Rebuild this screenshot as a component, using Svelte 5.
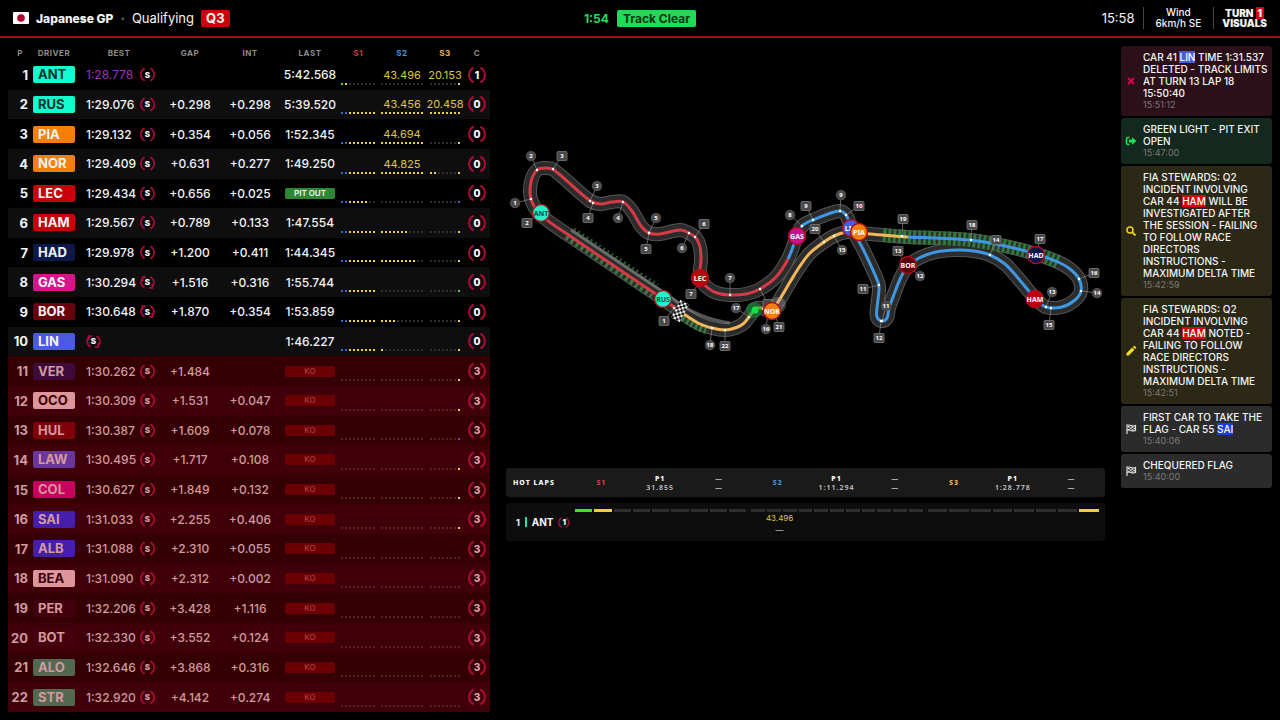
<script lang="ts">
    type Row = {
        code: string;
        bg: string;
        fg?: string;
        best: string;
        gap: string;
        int: string;
        last: string;
        s1: string;
        s2: string;
        s3: string;
        t2?: string;
        t3?: string;
        used?: boolean;
        count: number;
        top?: boolean;
    };

    const FULL1 = "bbyyyyyyy";
    const FULL2 = "yyyyyyyyyyy";
    const NONE1 = "---------";
    const NONE2 = "-----------";
    const NONE3 = "--------";

    // sector strings: one letter per mini sector (y, b, g, p or - for not set)
    const running: Row[] = [
        { code: "ANT", bg: "#14fbd0", fg: "#06332b", best: "1:28.778", gap: "", int: "", last: "5:42.568", s1: "gy-------", s2: NONE2, s3: "-------y", t2: "43.496", t3: "20.153", count: 1, top: true },
        { code: "RUS", bg: "#14fbd0", fg: "#06332b", best: "1:29.076", gap: "+0.298", int: "+0.298", last: "5:39.520", s1: FULL1, s2: FULL2, s3: "yyyyyyyy", t2: "43.456", t3: "20.458", count: 0 },
        { code: "PIA", bg: "#f67f0b", best: "1:29.132", gap: "+0.354", int: "+0.056", last: "1:52.345", s1: FULL1, s2: FULL2, s3: "-------y", t2: "44.694", count: 0 },
        { code: "NOR", bg: "#f67f0b", best: "1:29.409", gap: "+0.631", int: "+0.277", last: "1:49.250", s1: FULL1, s2: FULL2, s3: "yy-----y", t2: "44.825", count: 0 },
        { code: "LEC", bg: "#c70009", best: "1:29.434", gap: "+0.656", int: "+0.025", last: "PIT OUT", s1: "bbyyyyy--", s2: NONE2, s3: "-------b", count: 0 },
        { code: "HAM", bg: "#c70009", best: "1:29.567", gap: "+0.789", int: "+0.133", last: "1:47.554", s1: FULL1, s2: "yyyyyyy----", s3: "-------y", count: 0 },
        { code: "HAD", bg: "#0c1a4b", best: "1:29.978", gap: "+1.200", int: "+0.411", last: "1:44.345", s1: FULL1, s2: "yyyyyyyyy--", s3: "-------y", count: 0 },
        { code: "GAS", bg: "#d6148b", best: "1:30.294", gap: "+1.516", int: "+0.316", last: "1:55.744", s1: FULL1, s2: NONE2, s3: "-------g", used: true, count: 0 },
        { code: "BOR", bg: "#67000c", best: "1:30.648", gap: "+1.870", int: "+0.354", last: "1:53.859", s1: FULL1, s2: "yyyy-------", s3: "-------y", used: true, count: 0 },
        { code: "LIN", bg: "#4b5be0", best: "", gap: "", int: "", last: "1:46.227", s1: FULL1, s2: "y----------", s3: "-------y", used: true, count: 0 },
    ];

    // code, badge, text, best, gap, interval, last mini sector
    const out: string[][] = [
        ["VER", "#3d0a3a", "", "1:30.262", "+1.484", "", "y"],
        ["OCO", "#de969c", "#3d0008", "1:30.309", "+1.531", "+0.047", "y"],
        ["HUL", "#80000a", "", "1:30.387", "+1.609", "+0.078", "p"],
        ["LAW", "#69379b", "", "1:30.495", "+1.717", "+0.108", "y"],
        ["COL", "#c8005e", "", "1:30.627", "+1.849", "+0.132", "y"],
        ["SAI", "#451fac", "", "1:31.033", "+2.255", "+0.406", "y"],
        ["ALB", "#451fac", "", "1:31.088", "+2.310", "+0.055", "-"],
        ["BEA", "#de969c", "#3d0008", "1:31.090", "+2.312", "+0.002", "-"],
        ["PER", "#400010", "", "1:32.206", "+3.428", "+1.116", "-"],
        ["BOT", "#460010", "", "1:32.330", "+3.552", "+0.124", "-"],
        ["ALO", "#52684f", "", "1:32.646", "+3.868", "+0.316", "-"],
        ["STR", "#52684f", "", "1:32.920", "+4.142", "+0.274", "-"],
    ];

    const rows: Row[] = [
        ...running,
        ...out.map(([code, bg, fg, best, gap, int, end]) => ({
            code, bg, fg, best, gap, int, last: "KO",
            s1: NONE1, s2: NONE2, s3: NONE3.slice(1) + end, count: 3,
        })),
    ];

    const messages = [
        { kind: "deleted", text: "CAR 41", code: "LIN", color: "#4b5bd8", rest: "TIME 1:31.537 DELETED - TRACK LIMITS AT TURN 13 LAP 18 15:50:40", time: "15:51:12" },
        { kind: "green", text: "GREEN LIGHT - PIT EXIT OPEN", time: "15:47:00" },
        { kind: "search", text: "FIA STEWARDS: Q2 INCIDENT INVOLVING CAR 44", code: "HAM", color: "#d6000c", rest: "WILL BE INVESTIGATED AFTER THE SESSION - FAILING TO FOLLOW RACE DIRECTORS INSTRUCTIONS - MAXIMUM DELTA TIME", time: "15:42:59" },
        { kind: "noted", text: "FIA STEWARDS: Q2 INCIDENT INVOLVING CAR 44", code: "HAM", color: "#d6000c", rest: "NOTED - FAILING TO FOLLOW RACE DIRECTORS INSTRUCTIONS - MAXIMUM DELTA TIME", time: "15:42:51" },
        { kind: "finish", text: "FIRST CAR TO TAKE THE FLAG - CAR 55", code: "SAI", color: "#1440dc", rest: "", time: "15:40:06" },
        { kind: "finish", text: "CHEQUERED FLAG", time: "15:40:00" },
    ];

    const TRACK: number[][] = [
        [678, 310], [663, 299], [570, 236], [541, 215], [531, 199], [531, 182], [537, 170], [546, 168], [554, 170],
        [589, 200], [600, 204], [612, 202], [623, 202], [632, 211], [641, 226], [649, 233], [660, 234], [680, 230],
        [689, 233], [696, 238], [700, 247], [701, 260], [700, 278], [708, 288], [717, 293], [730, 295], [746, 294],
        [760, 289], [776, 277], [788, 259], [797, 236], [802, 226], [813, 220], [839, 211], [846, 215], [851, 227],
        [863, 249], [878, 282], [879, 290], [877, 308], [877, 317], [882, 321], [887, 318], [889, 308], [893, 297],
        [901, 277], [908, 266], [919, 258], [936, 252], [956, 250], [974, 251], [990, 255], [1005, 264], [1018, 278],
        [1035, 298], [1046, 307], [1062, 307], [1075, 300], [1081, 291], [1079, 279], [1070, 269], [1058, 262],
        [1036, 254], [1005, 246], [970, 240], [935, 238], [908, 237], [882, 235], [859, 233], [847, 232], [834, 236],
        [824, 242], [810, 253], [800, 266], [790, 282], [776, 305], [770, 310], [757, 308], [749, 317], [743, 324],
        [735, 328], [725, 330], [712, 328], [698, 323],
    ];

    const smooth = (from: number, to: number): string => {
        const n = TRACK.length;
        const at = (i: number) => TRACK[(i + n) % n];
        let d = `M${at(from).join(" ")}`;
        for (let i = from; i < to; i++) {
            const [a, b, c, e] = [at(i - 1), at(i), at(i + 1), at(i + 2)];
            const len = Math.hypot(c[0] - b[0], c[1] - b[1]) / 3;
            const u = Math.hypot(c[0] - a[0], c[1] - a[1]);
            const v = Math.hypot(e[0] - b[0], e[1] - b[1]);
            const x1 = b[0] + ((c[0] - a[0]) / u) * len;
            const y1 = b[1] + ((c[1] - a[1]) / u) * len;
            const x2 = c[0] - ((e[0] - b[0]) / v) * len;
            const y2 = c[1] - ((e[1] - b[1]) / v) * len;
            d += `C${x1} ${y1} ${x2} ${y2} ${c[0]} ${c[1]}`;
        }
        return d;
    };

    const lap = smooth(0, TRACK.length);
    const sectors = [
        { color: "#d63a45", d: smooth(0, 29) },
        { color: "#3e97e0", d: smooth(29, 66) },
        { color: "#f3b65a", d: smooth(66, TRACK.length) },
    ];

    // number, label x, y, point x, y
    const corners: number[][] = [
        [1, 515, 203, 531, 199], [2, 531, 156, 537, 170], [3, 597, 186, 590, 201], [4, 618, 218, 623, 202],
        [5, 656, 218, 649, 233], [6, 682, 248, 689, 233], [7, 730, 278, 730, 295], [8, 790, 215, 802, 226],
        [9, 841, 195, 840, 211], [11, 886, 306, 882, 321], [12, 920, 276, 908, 266], [13, 1052, 292, 1046, 307],
        [14, 1097, 293, 1081, 291], [15, 842, 250, 834, 236], [16, 766, 329, 768, 312], [17, 736, 308, 749, 317],
        [18, 710, 345, 712, 328],
    ];
    const marshals: number[][] = [
        [1, 664, 321, 674, 308], [2, 527, 223, 538, 214], [3, 562, 156, 553, 169], [4, 588, 218, 593, 203],
        [5, 646, 249, 649, 233], [6, 704, 224, 695, 237], [7, 691, 294, 700, 282], [8, 768, 304, 760, 289],
        [9, 806, 206, 813, 220], [10, 859, 206, 846, 215], [11, 863, 289, 879, 285], [12, 879, 338, 881, 321],
        [13, 898, 251, 906, 266], [14, 996, 240, 990, 255], [15, 1049, 325, 1051, 308], [16, 1094, 273, 1079, 279],
        [17, 1040, 239, 1036, 254], [18, 972, 225, 971, 240], [19, 903, 219, 902, 236], [20, 815, 229, 824, 242],
        [21, 779, 327, 774, 311], [22, 725, 346, 725, 330],
    ];
    const cars = [
        { code: "ANT", x: 541, y: 213, bg: "#1ff5cc", fg: "#0b4a40" },
        { code: "RUS", x: 663, y: 299, bg: "#1ff5cc", fg: "#0b4a40" },
        { code: "LEC", x: 700, y: 278, bg: "#c00008", fg: "#fff" },
        { code: "GAS", x: 797, y: 236, bg: "#c8128e", fg: "#fff" },
        { code: "LIN", x: 851, y: 228, bg: "#4b5be0", fg: "#fff" },
        { code: "PIA", x: 859, y: 232, bg: "#f67f0b", fg: "#fff" },
        { code: "NOR", x: 772, y: 311, bg: "#f67f0b", fg: "#fff" },
        { code: "BOR", x: 908, y: 265, bg: "#5e000c", fg: "#fff" },
        { code: "HAD", x: 1036, y: 255, bg: "#0c1550", fg: "#fff" },
        { code: "HAM", x: 1035, y: 299, bg: "#c00010", fg: "#fff" },
    ];

    const hotHeads = [
        { name: "S1", time: "31.855" },
        { name: "S2", time: "1:11.294" },
        { name: "S3", time: "1:28.778" },
    ];
    const hotSectors = [
        { bars: "gy-------", time: "" },
        { bars: NONE2, time: "43.496" },
        { bars: "-------y", time: "" },
    ];
</script>

{#snippet minis(codes: string)}
    <span class="minis">
        {#each codes as c}
            <i class="mini {c === '-' ? 'off' : c}"></i>
        {/each}
    </span>
{/snippet}

{#snippet ring(text: string, size: string, used = false)}
    <span class="ring {size}">
        <svg viewBox="0 0 18 18" aria-hidden="true">
            {#if used}
                <path d="M2 2.500h5M3.200 2.500v4.600M3.400 3.400C.3 7.200.4 12.500 5.400 15.700M16 15.500h-5M14.800 15.500v-4.600M14.600 14.600C17.700 10.800 17.600 5.500 12.600 2.300" />
            {:else}
                <path d="M5.600 1.600C-.4 5-.4 13 5.600 16.400M12.400 1.600C18.400 5 18.400 13 12.400 16.400" />
            {/if}
        </svg>
        <b>{text}</b>
    </span>
{/snippet}

<div class="board">
    <header>
        <div class="session">
            <svg class="flag" viewBox="0 0 16 12" aria-label="Japan"><rect width="16" height="12" rx="1" fill="#fff" /><circle cx="8" cy="6" r="3.800" fill="#b5002c" /></svg>
            <h1>Japanese GP</h1>
            <span class="sep">•</span>
            <span>Qualifying</span>
            <b class="part">Q3</b>
        </div>
        <div class="status">
            <b class="remaining">1:54</b>
            <b class="clear">Track Clear</b>
        </div>
        <div class="info">
            <time>15:58</time>
            <div class="wind">Wind<br />6km/h SE</div>
            <div class="brand"><div>TURN <em>1</em></div><div>VISUALS</div></div>
        </div>
    </header>

    <main>
        <table>
            <colgroup>
                <col class="c-p" /><col class="c-driver" /><col class="c-best" /><col class="c-gap" /><col class="c-int" />
                <col class="c-last" /><col class="c-s1" /><col class="c-s2" /><col class="c-s3" /><col class="c-c" />
            </colgroup>
            <thead>
                <tr>
                    <th>P</th><th>DRIVER</th><th>BEST</th><th>GAP</th><th>INT</th><th>LAST</th>
                    <th class="s1">S1</th><th class="s2">S2</th><th class="s3">S3</th><th>C</th>
                </tr>
            </thead>
            <tbody>
                {#each rows as row, i}
                    <tr class:ko={row.last === "KO"}>
                        <td class="pos">{i + 1}</td>
                        <td class="driver"><span class="badge" style:background={row.bg} style:color={row.fg || null}>{row.code}</span></td>
                        <td>
                            <span class="best" class:top={row.top}>
                                {#if row.best}<span class="time">{row.best}</span>{/if}
                                {@render ring("S", "small", row.used)}
                            </span>
                        </td>
                        <td>{row.gap}</td>
                        <td>{row.int}</td>
                        <td>
                            {#if row.last === "KO"}
                                <span class="tag out">KO</span>
                            {:else if row.last === "PIT OUT"}
                                <span class="tag pit">PIT OUT</span>
                            {:else}
                                {row.last}
                            {/if}
                        </td>
                        <td class="sector">{@render minis(row.s1)}</td>
                        <td class="sector"><span>{row.t2 ?? ""}</span>{@render minis(row.s2)}</td>
                        <td class="sector"><span>{row.t3 ?? ""}</span>{@render minis(row.s3)}</td>
                        <td>{@render ring(String(row.count), "large")}</td>
                    </tr>
                {/each}
            </tbody>
        </table>

        <section class="centre">
            <svg class="map" viewBox="506 46 599 414" role="img" aria-label="Track map">
                <defs>
                    <pattern id="chequer" width="5" height="5" patternUnits="userSpaceOnUse">
                        <rect width="5" height="5" fill="#000" />
                        <path d="M0 0h2.500v2.500H0zM2.500 2.500H5V5H2.500z" fill="#fff" />
                    </pattern>
                </defs>
                <g fill="none" stroke-linejoin="round">
                    <path d={lap} stroke="#555" stroke-width="14" />
                    <path d={lap} stroke="#2b2b2b" stroke-width="12" />
                    <path d="M571 230L672 298Q696 318 730 323" stroke="#8b908b" stroke-width="3" opacity=".6" />
                    <path d="M574 229L658 285" stroke="#275c31" stroke-width="3" stroke-dasharray="2 3" />
                    <path d="M566 237L652 296" stroke="#3a7a42" stroke-width="5" stroke-dasharray="3 3" />
                    <path d="M682 318Q694 327 706 331" stroke="#3a7a42" stroke-width="6" stroke-dasharray="3 2" />
                    <path d={smooth(61, 67)} stroke="#31763a" stroke-width="14" stroke-dasharray="3 2" />
                    {#each sectors as sector}
                        <path d={sector.d} stroke={sector.color} stroke-width="3" />
                    {/each}
                </g>

                {#each corners as [, x, y, px, py]}
                    <path d="M{x} {y}L{px} {py}" stroke="#888" stroke-width=".7" />
                    <circle cx={px} cy={py} r="1.200" fill="#fff" />
                {/each}
                {#each marshals as [, x, y, px, py]}
                    <path d="M{x} {y}L{px} {py}" stroke="#888" stroke-width=".7" />
                    <circle cx={px} cy={py} r="1.200" fill="#fff" />
                {/each}
                {#each corners as [n, x, y]}
                    <circle cx={x} cy={y} r="5.200" fill="#4b4b4d" />
                    <text class="num" {x} y={y + 2}>{n}</text>
                {/each}
                {#each marshals as [n, x, y]}
                    <rect x={x - 5} y={y - 4.5} width="10" height="9" rx="1" fill="#48484a" stroke="#777" stroke-width=".8" />
                    {#if n !== 8}
                        <text class="num" {x} y={y + 2}>{n}</text>
                    {/if}
                {/each}

                <g transform="translate(680 311) rotate(28)">
                    <rect x="-5" y="-10" width="10" height="20" fill="url(#chequer)" />
                </g>
                <circle cx="754" cy="310" r="8" fill="#0f8f38" opacity=".6" />
                <circle cx="755" cy="310" r="3.500" fill="#16e04a" />
                <circle cx="778" cy="305" r="8" fill="#aaa" opacity=".35" />
                {#each cars as car}
                    <circle cx={car.x} cy={car.y} r="8.500" fill={car.bg} stroke="#a5101a" stroke-width="1.500" />
                    <text class="car" x={car.x} y={car.y + 3} fill={car.fg}>{car.code}</text>
                {/each}
            </svg>

            <div class="hot-head">
                <b class="title">HOT LAPS</b>
                {#each hotHeads as head}
                    <b class={head.name.toLowerCase()}>{head.name}</b>
                    <span><b>P1</b><br />{head.time}</span>
                    <span>—<br />—</span>
                {/each}
            </div>
            <div class="hot-row">
                <div class="who"><b>1</b><i></i><b class="name">ANT</b>{@render ring("1", "tiny")}</div>
                {#each hotSectors as sector}
                    <div class="hot-sector">
                        <div class="bars">
                            {#each sector.bars as c}
                                <i class={c === "-" ? "off" : c}></i>
                            {/each}
                        </div>
                        {#if sector.time}
                            <div class="hot-time">{sector.time}<br /><span>—</span></div>
                        {/if}
                    </div>
                {/each}
            </div>
        </section>

        <aside>
            {#each messages as m}
                <article class={m.kind}>
                    <svg viewBox="0 0 12 12" aria-hidden="true">
                        {#if m.kind === "deleted"}
                            <path d="M3 3l6 6M9 3l-6 6" fill="none" stroke="#e00050" stroke-width="2" />
                        {:else if m.kind === "green"}
                            <path d="M4.500 2.500H3Q1.500 2.500 1.500 4v4Q1.500 9.500 3 9.500h1.500" fill="none" stroke="#22dd55" stroke-width="1.500" />
                            <path d="M4 4.600h3V2.200L11.500 6 7 9.800V7.400H4z" fill="#22dd55" />
                        {:else if m.kind === "search"}
                            <circle cx="5" cy="5" r="3" fill="none" stroke="#f5d020" stroke-width="1.500" />
                            <path d="M7.200 7.200L10.500 10.500" stroke="#f5d020" stroke-width="1.800" />
                        {:else if m.kind === "noted"}
                            <path d="M1.500 8.300L7.200 2.600l2.200 2.200-5.700 5.700H1.500zM7.900 1.900l.9-.9q.5-.4 1 0l1.200 1.200q.4.500 0 1l-.9.900z" fill="#f5e020" />
                        {:else}
                            <path d="M2 1.500v9.500M2 2.500q2-1 4 0t4.500 0v5q-2.500 1-4.500 0t-4 0" fill="none" stroke="#ddd" stroke-width="1.200" />
                            <path d="M3 3h1.800v1.500H3zM6.500 3.200h1.800v1.500H6.500zM4.800 4.600h1.800v1.500H4.800zM8.300 4.700h1.800v1.500H8.300zM3 6h1.800v1.300H3zM6.500 6.200h1.800v1.500H6.500z" fill="#ddd" />
                        {/if}
                    </svg>
                    <p>
                        {m.text}
                        {#if m.code}<mark style:background={m.color}>{m.code}</mark>{/if}
                        {m.rest ?? ""}
                        <time>{m.time}</time>
                    </p>
                </article>
            {/each}
        </aside>
    </main>
</div>

<style>
    :global(body) {
        margin: 0;
        background: #000;
    }

    .board {
        display: flex;
        flex-direction: column;
        height: 100vh;
        color: #f4f4f4;
        font-family: Inter, "Liberation Sans", sans-serif;
        font-size: 12px;
    }

    i,
    em {
        font-style: normal;
    }

    header {
        display: grid;
        grid-template-columns: 1fr auto 1fr;
        align-items: center;
        height: 36px;
        padding: 0 13px;
        border-bottom: 2px solid #a30d0d;
        font-size: 13px;
    }

    .session,
    .status,
    .info {
        display: flex;
        align-items: center;
    }

    .session {
        gap: 7px;
    }

    .flag {
        width: 16px;
        height: 12px;
    }

    h1 {
        margin: 0;
        font-size: 12px;
        font-weight: 800;
    }

    .sep {
        color: #666;
        font-size: 8px;
    }

    .part,
    .clear {
        border-radius: 2px;
        line-height: 17px;
    }

    .part {
        padding: 0 5px;
        background: #cc0008;
    }

    .status {
        gap: 8px;
        font-size: 12px;
    }

    .remaining {
        color: #25dd5c;
    }

    .clear {
        padding: 0 6px;
        background: #1fdb57;
        color: #06350f;
    }

    .info {
        justify-content: flex-end;
    }

    .wind {
        margin-left: 8px;
        padding: 0 12px;
        border: solid #444;
        border-width: 0 1px;
        font-size: 10px;
        font-weight: 500;
        line-height: 11px;
        text-align: center;
    }

    .brand {
        margin-left: 8px;
        font-size: 10px;
        font-weight: 900;
        line-height: 10px;
        text-align: center;
    }

    .brand em {
        padding: 0 2px;
        background: #d60012;
    }

    main {
        display: grid;
        grid-template-columns: 482px minmax(0, 1fr) 151px;
        grid-template-rows: minmax(0, 1fr);
        flex: 1;
        gap: 16px;
        min-height: 0;
        padding: 8px;
    }

    table {
        width: 482px;
        height: 100%;
        border-collapse: collapse;
        table-layout: fixed;
        font-weight: 500;
    }

    .c-p {
        width: 24px;
    }

    .c-driver {
        width: 44px;
    }

    .c-best {
        width: 86px;
    }

    .c-gap,
    .c-last {
        width: 56px;
    }

    .c-int {
        width: 64px;
    }

    .c-s1 {
        width: 40px;
    }

    .c-s2 {
        width: 48px;
    }

    .c-s3 {
        width: 38px;
    }

    .c-c {
        width: 26px;
    }

    th,
    td {
        padding: 0;
        text-align: center;
        white-space: nowrap;
    }

    thead tr {
        height: 14px;
    }

    tbody tr {
        height: 29px;
    }

    th {
        color: #8d8d8d;
        font-size: 8px;
        font-weight: 700;
        letter-spacing: 0.5px;
        line-height: 14px;
    }

    .s1 {
        color: #d63a45;
    }

    .s2 {
        color: #3e97e0;
    }

    .s3 {
        color: #f3b65a;
    }

    tbody tr:nth-child(even) {
        background: #0e0e0e;
    }

    tbody tr.ko {
        background: #350003;
        color: #d39a9f;
    }

    tbody tr.ko:nth-child(even) {
        background: #400009;
    }

    .pos {
        padding-right: 4px;
        font-size: 13px;
        font-weight: 700;
        text-align: right;
    }

    .badge {
        display: block;
        box-sizing: border-box;
        width: 42px;
        margin-left: 1px;
        padding-left: 5px;
        border-radius: 2px;
        font-size: 13px;
        font-weight: 700;
        line-height: 17px;
        text-align: left;
    }

    .best {
        display: flex;
        align-items: center;
        gap: 3px;
        padding-left: 10px;
    }

    .time {
        width: 51px;
        text-align: left;
    }

    .best.top {
        color: #a32fc4;
        font-weight: 400;
    }

    .ring {
        display: inline-grid;
        place-items: center;
        color: #fff;
        vertical-align: middle;
    }

    .ring > * {
        grid-area: 1 / 1;
    }

    .ring svg {
        width: 100%;
        height: 100%;
        fill: none;
        stroke: #b00a3a;
        stroke-width: 2;
    }

    .small {
        width: 15px;
        height: 15px;
        font-size: 8px;
    }

    .large {
        width: 18px;
        height: 18px;
        font-size: 10px;
    }

    .tiny {
        width: 13px;
        height: 13px;
        font-size: 8px;
    }

    .ring b {
        font-weight: 800;
    }

    .ko .ring {
        color: #dfa5aa;
    }

    .tag {
        display: block;
        width: 50px;
        margin: 0 auto;
        border-radius: 2px;
        font-size: 8px;
        line-height: 11px;
    }

    .pit {
        background: #2d8734;
        font-weight: 600;
    }

    .out {
        background: #6a0003;
        color: #b53a42;
    }

    .sector {
        padding-bottom: 5px;
        color: #dfc63c;
        font-size: 11px;
        font-weight: 400;
        line-height: 16px;
        vertical-align: bottom;
    }

    .minis {
        display: flex;
        justify-content: center;
        gap: 2px;
    }

    .mini {
        width: 2px;
        height: 2px;
    }

    .off {
        background: #2e2e2e;
    }

    .ko .off {
        background: #5a2027;
    }

    .y {
        background: #f0cf3a;
    }

    .b {
        background: #2c6fd0;
    }

    .g {
        background: #4fdc1e;
    }

    .p {
        background: #8a35c8;
    }

    .centre {
        min-width: 0;
    }

    .map {
        display: block;
        width: 100%;
        margin-bottom: 8px;
    }

    .num,
    .car {
        font-family: "Noto Sans", sans-serif;
        font-weight: 700;
        text-anchor: middle;
    }

    .num {
        fill: #fff;
        font-size: 6px;
    }

    .car {
        font-size: 7px;
    }

    .hot-head,
    .hot-row {
        display: grid;
        box-sizing: border-box;
        border-radius: 3px;
    }

    .hot-head {
        grid-template-columns: 66px repeat(9, 1fr);
        align-items: center;
        height: 29px;
        margin-bottom: 6px;
        padding-right: 4px;
        background: #1a1a1a;
        color: #c8c8c8;
        font-family: "Noto Sans", sans-serif;
        font-size: 7px;
        font-weight: 600;
        letter-spacing: 1px;
        line-height: 9px;
        text-align: center;
    }

    .hot-head b {
        font-weight: 800;
    }

    .hot-head span b,
    .title {
        color: #fff;
    }

    .title {
        padding-left: 7px;
        text-align: left;
    }

    .hot-row {
        grid-template-columns: 64px repeat(3, 1fr);
        gap: 5px;
        height: 38px;
        padding-right: 6px;
        background: #0d0d0d;
    }

    .who {
        display: flex;
        align-items: center;
        gap: 5px;
        padding-left: 10px;
        font-size: 9px;
    }

    .who i {
        width: 2px;
        height: 10px;
        background: #27e0bb;
    }

    .who .name {
        font-size: 10px;
    }

    .bars {
        display: flex;
        gap: 2px;
        padding-top: 6px;
    }

    .bars i {
        flex: 1;
        height: 3px;
    }

    .hot-time {
        width: 33%;
        color: #dfc63c;
        font-size: 8px;
        line-height: 12px;
        text-align: center;
    }

    .hot-time span {
        color: #c8c8c8;
    }

    aside {
        display: flex;
        flex-direction: column;
        gap: 2px;
    }

    article {
        display: grid;
        grid-template-columns: 12px 1fr;
        align-items: center;
        gap: 6px;
        padding: 5px 2px 5px 4px;
        border-radius: 3px;
        background: #2b2b2c;
    }

    article svg {
        width: 12px;
        height: 12px;
    }

    .deleted {
        background: #2b1019;
    }

    .green {
        background: #13281e;
    }

    .search,
    .noted {
        background: #2b2815;
    }

    p {
        margin: 0;
        font-size: 10px;
        font-weight: 500;
        line-height: 12px;
    }

    mark {
        color: #fff;
    }

    p time {
        display: block;
        color: #7d7878;
        font-size: 9px;
        font-weight: 400;
    }
</style>
